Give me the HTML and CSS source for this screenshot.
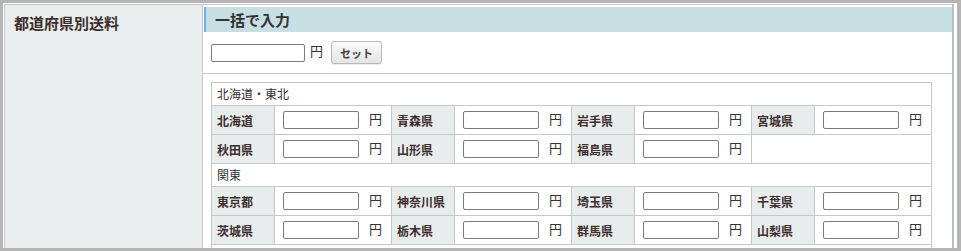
FILE: index.html
```html
<!DOCTYPE html>
<html lang="ja">
<head>
<meta charset="utf-8">
<title>都道府県別送料</title>
<link rel="stylesheet" href="styles.css">
</head>
<body>
<div class="frame">
  <div class="inner">
    <div class="label-col"><span class="sec-title">都道府県別送料</span></div>
    <div class="content-col">
      <div class="head">一括で入力</div>
      <div class="bulk">
        <input class="in-lg" type="text"><span class="yen yen-lg">円</span><button class="btn" type="button">セット</button>
      </div>
      <div class="pref-wrap">
        <div class="pref-grid">
          <div class="region">北海道・東北</div>
          <div class="pl">北海道</div><div class="pi"><input class="in-sm" type="text"><span class="yen">円</span></div>
          <div class="pl">青森県</div><div class="pi"><input class="in-sm" type="text"><span class="yen">円</span></div>
          <div class="pl">岩手県</div><div class="pi"><input class="in-sm" type="text"><span class="yen">円</span></div>
          <div class="pl">宮城県</div><div class="pi"><input class="in-sm" type="text"><span class="yen">円</span></div>
          <div class="pl">秋田県</div><div class="pi"><input class="in-sm" type="text"><span class="yen">円</span></div>
          <div class="pl">山形県</div><div class="pi"><input class="in-sm" type="text"><span class="yen">円</span></div>
          <div class="pl">福島県</div><div class="pi"><input class="in-sm" type="text"><span class="yen">円</span></div>
          <div class="empty"></div>
          <div class="region">関東</div>
          <div class="pl">東京都</div><div class="pi"><input class="in-sm" type="text"><span class="yen">円</span></div>
          <div class="pl">神奈川県</div><div class="pi"><input class="in-sm" type="text"><span class="yen">円</span></div>
          <div class="pl">埼玉県</div><div class="pi"><input class="in-sm" type="text"><span class="yen">円</span></div>
          <div class="pl">千葉県</div><div class="pi"><input class="in-sm" type="text"><span class="yen">円</span></div>
          <div class="pl">茨城県</div><div class="pi"><input class="in-sm" type="text"><span class="yen">円</span></div>
          <div class="pl">栃木県</div><div class="pi"><input class="in-sm" type="text"><span class="yen">円</span></div>
          <div class="pl">群馬県</div><div class="pi"><input class="in-sm" type="text"><span class="yen">円</span></div>
          <div class="pl">山梨県</div><div class="pi"><input class="in-sm" type="text"><span class="yen">円</span></div>
          <div class="region region-next"></div>
        </div>
      </div>
    </div>
  </div>
</div>
</body>
</html>
```
FILE: styles.css
```css
html, body {
  margin: 0;
  padding: 0;
  background: #ffffff;
}

body {
  font-family: "Noto Sans CJK JP", "Noto Sans", sans-serif;
  color: #333333;
  font-size: 12px;
}

.frame {
  box-sizing: border-box;
  width: 961px;
  height: 251px;
  border: 3px solid #b4b4b4;
  border-right-width: 4px;
  padding: 1px 3px 0 1px;
  overflow: hidden;
  background: #ffffff;
}

.inner {
  display: flex;
  border-top: 1px solid #c3c9c9;
  border-left: 1px solid #c3c9c9;
  border-right: 2px solid #b9bebe;
}

.label-col {
  flex: none;
  box-sizing: border-box;
  width: 198px;
  background: #e9eded;
  border-right: 1px solid #c3c9c9;
  padding: 8px 9px;
}

.sec-title {
  font-size: 15px;
  font-weight: 700;
  line-height: 20px;
  color: #3d2e2e;
}

.content-col {
  flex: 1;
  padding-top: 2px;
  background: #ffffff;
}

.head {
  margin-left: 1px;
  height: 25px;
  line-height: 25px;
  border-left: 2px solid #6ab5ec;
  background: #c7dee3;
  padding-left: 9px;
  font-size: 15px;
  font-weight: 700;
  color: #333333;
}

.bulk {
  display: flex;
  align-items: center;
  height: 23px;
  padding: 9px 8px;
  border-bottom: 1px solid #c3c9c9;
}

.in-lg,
.in-sm {
  box-sizing: border-box;
  height: 18px;
  margin: 0;
  padding: 0 2px;
  border: 1px solid #7b7b7b;
  border-radius: 2px;
  background: #ffffff;
  font-size: 12px;
}

.in-lg {
  width: 94px;
}

.in-sm {
  width: 76px;
}

.yen {
  font-size: 13px;
  line-height: 14px;
  margin-left: 9px;
}

.yen-lg {
  margin-left: 5px;
  margin-bottom: 3px;
}

.btn {
  box-sizing: border-box;
  margin-left: 8px;
  width: 51px;
  height: 23px;
  padding: 0;
  border: 1px solid #b8b8b8;
  border-radius: 3px;
  background: linear-gradient(#fbfbfb, #e4e4e4);
  box-shadow: 0 1px 1px rgba(0, 0, 0, 0.08);
  font-family: "Noto Sans CJK JP", sans-serif;
  font-size: 11px;
  font-weight: 700;
  color: #4a4040;
}

.pref-wrap {
  padding: 8px;
}

.pref-grid {
  display: grid;
  grid-template-columns: repeat(4, 62px 116px);
  gap: 1px;
  width: max-content;
  background: #c3c9c9;
  border: 1px solid #c3c9c9;
}

.region {
  grid-column: 1 / -1;
  height: 22px;
  line-height: 22px;
  padding-left: 5px;
  background: #ffffff;
  font-size: 12px;
}

.pl {
  display: flex;
  align-items: center;
  height: 28px;
  padding-left: 5px;
  background: #e8eced;
  font-size: 12px;
  font-weight: 700;
  color: #3d2e2e;
  white-space: nowrap;
}

.pi {
  display: flex;
  align-items: flex-start;
  height: 28px;
  box-sizing: border-box;
  padding: 5px 0 5px 8px;
  background: #ffffff;
}

.pi .yen {
  margin-left: 10px;
  margin-top: 1px;
}

.empty {
  grid-column: span 2;
  background: #ffffff;
}
```
